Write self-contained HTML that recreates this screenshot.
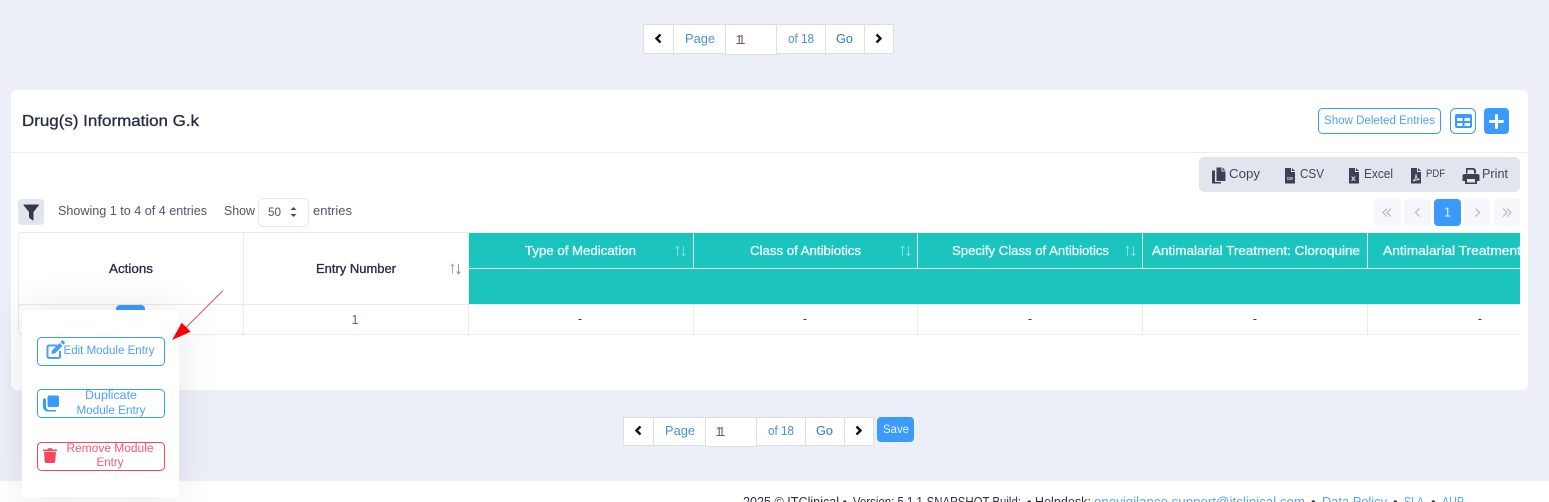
<!DOCTYPE html>
<html lang="en">
<head>
<meta charset="utf-8">
<title>Drug(s) Information</title>
<style>
html,body{margin:0;padding:0;width:1549px;height:502px;overflow:hidden;background:#eceff8}
svg{display:block}
text{font-family:"Liberation Sans",Arial,sans-serif;white-space:pre}
.b{stroke:currentColor;stroke-width:.3}
</style>
</head>
<body>
<svg xmlns="http://www.w3.org/2000/svg" width="1549" height="502" viewBox="0 0 1549 502">
<defs>
<clipPath id="tc"><rect x="18" y="228" width="1502" height="120"/></clipPath>
<clipPath id="fc"><rect x="0" y="481" width="1549" height="21"/></clipPath>
<filter id="sh" x="-60%" y="-40%" width="220%" height="180%"><feGaussianBlur stdDeviation="22"/></filter>
</defs>

<rect width="1549" height="502" fill="#eceff8"/>

<!-- top pagination -->
<g font-size="13">
<rect x="643.5" y="24.5" width="250" height="29" fill="#fff" stroke="#dedfe3"/>
<path d="M673.5 24v30M825.5 24v30M864.5 24v30" stroke="#dedfe3" fill="none"/>
<rect x="725.5" y="24.5" width="51" height="30" fill="#fff" stroke="#dedfe3"/>
<path d="M660.5 34.500l-4 4 4 4" fill="none" stroke="#111" stroke-width="2.400"/>
<path d="M876.5 34.500l4 4-4 4" fill="none" stroke="#111" stroke-width="2.400"/>
<text x="685" y="43" fill="#4a8fd6" textLength="30" lengthAdjust="spacingAndGlyphs">Page</text>
<text x="735.500" y="44" fill="#7d5a48" style="font-size:12.500px;letter-spacing:-3.200px">11</text>
<text x="788" y="43" fill="#4a8fd6" textLength="26" lengthAdjust="spacingAndGlyphs">of 18</text>
<text x="836" y="43" fill="#2f78c8" textLength="17" lengthAdjust="spacingAndGlyphs">Go</text>
</g>

<!-- card -->
<rect x="11" y="90" width="1517" height="300" rx="6" fill="#fff"/>
<text x="22" y="126" font-size="16" fill="#252b42" class="b" style="color:#252b42" textLength="177" lengthAdjust="spacingAndGlyphs">Drug(s) Information G.k</text>
<rect x="11" y="152" width="1517" height="1" fill="#eceef5"/>

<rect x="1318.500" y="108.500" width="122" height="25" rx="4" fill="#fff" stroke="#3a9bfd"/>
<text x="1324" y="124" font-size="11.500" fill="#4f9ffb" textLength="111" lengthAdjust="spacingAndGlyphs">Show Deleted Entries</text>
<rect x="1450.500" y="108.500" width="25" height="25" rx="5" fill="#fff" stroke="#3a9bfd"/>
<path d="M1457 114h13a2 2 0 0 1 2 2v10a2 2 0 0 1-2 2h-13a2 2 0 0 1-2-2v-10a2 2 0 0 1 2-2zm0 4v3h5.500v-3zm7.500 0v3h5.500v-3zm-7.500 5v3h5.500v-3zm7.500 0v3h5.500v-3z" fill="#3a9bfd" fill-rule="evenodd"/>
<rect x="1484" y="108" width="25" height="26" rx="4" fill="#3a9bfd"/>
<path d="M1496.500 115.500v12M1490.500 121.500h12" stroke="#fff" stroke-width="3" stroke-linecap="round"/>

<!-- toolbar -->
<rect x="1199" y="157" width="321" height="35" rx="5" fill="#e2e4ee"/>
<g fill="#3b4255">
<path d="M1216.500 167.500h5v4h4v9.500h-9z"/>
<path d="M1222.500 167.500l3 3h-3zM1212 170.500h3v11.500h6v1.500h-9z"/>
<path d="M1285 168h6v4h4v11.500h-10zM1292 168l3 3h-3z"/>
<path d="M1349 168h6v4h4v11.500h-10zM1356 168l3 3h-3z"/>
<path d="M1411 168h6v4h4v11.500h-10zM1418 168l3 3h-3z"/>
<path d="M1466 168h8l2 2v3.500h-2v-3l-1-.8h-5.500v3.800h-1.500zM1464.500 174h13a2 2 0 0 1 2 2v5h-2.500v3h-12v-3h-2.500v-5a2 2 0 0 1 2-2zm2.500 5v3.500h8v-3.500z" fill-rule="evenodd"/>
</g>
<text x="1287" y="180" font-size="5" font-weight="bold" fill="#e2e4ee" textLength="6" lengthAdjust="spacingAndGlyphs">csv</text>
<text x="1351" y="181" font-size="8.500" font-weight="bold" fill="#e2e4ee">x</text>
<path d="M1413 181c2-1 3-4 3-7 0 3 1 5 3.500 5.500-2 0-4 .5-6.500 1.500z" fill="none" stroke="#e2e4ee" stroke-width=".9"/>
<g fill="#3f465a" font-size="13">
<text x="1229" y="178" textLength="31" lengthAdjust="spacingAndGlyphs">Copy</text>
<text x="1300" y="178" textLength="24" lengthAdjust="spacingAndGlyphs">CSV</text>
<text x="1364" y="178" textLength="29" lengthAdjust="spacingAndGlyphs">Excel</text>
<text x="1426" y="177" style="font-size:11px" textLength="19" lengthAdjust="spacingAndGlyphs">PDF</text>
<text x="1482" y="178" textLength="26" lengthAdjust="spacingAndGlyphs">Print</text>
</g>

<!-- datatable pager -->
<g fill="#f6f7fa">
<rect x="1374" y="199" width="27" height="27" rx="4"/>
<rect x="1404" y="199" width="27" height="27" rx="4"/>
<rect x="1464" y="199" width="26" height="27" rx="4"/>
<rect x="1494" y="199" width="26" height="27" rx="4"/>
</g>
<rect x="1434" y="199" width="27" height="27" rx="4" fill="#3a9bfd"/>
<g fill="none" stroke="#b4b7c0" stroke-width="1.200">
<path d="M1387 208.500l-4 4 4 4M1391 208.500l-4 4 4 4"/>
<path d="M1419.500 208.500l-4 4 4 4"/>
<path d="M1475.500 208.500l4 4-4 4"/>
<path d="M1503 208.500l4 4-4 4M1507 208.500l4 4-4 4"/>
</g>
<text x="1447.500" y="216.500" font-size="12.500" fill="#e8f2ff" text-anchor="middle">1</text>

<!-- filter row -->
<rect x="18" y="199" width="26" height="26" rx="4" fill="#e2e4ee"/>
<path d="M24 205h14.500l-5.500 7v8l-3.500-2.500v-5.500z" fill="#343a4e" stroke="#343a4e" stroke-linejoin="round"/>
<text x="58" y="215" font-size="12.500" fill="#4f566b" textLength="149" lengthAdjust="spacingAndGlyphs">Showing 1 to 4 of 4 entries</text>
<text x="224" y="215" font-size="12.500" fill="#4f566b" textLength="31" lengthAdjust="spacingAndGlyphs">Show</text>
<rect x="258.500" y="198.500" width="50" height="28" rx="5" fill="#fff" stroke="#e6e8f0"/>
<text x="268" y="216" font-size="11.500" fill="#4f566b" textLength="13" lengthAdjust="spacingAndGlyphs">50</text>
<path d="M290.500 210l3 -3 3 3zM290.500 214l3 3 3-3z" fill="#4a5060"/>
<text x="313" y="215" font-size="12.500" fill="#4f566b" textLength="39" lengthAdjust="spacingAndGlyphs">entries</text>

<!-- table -->
<g clip-path="url(#tc)">
<rect x="18.500" y="232.500" width="1520" height="102" fill="#fff" stroke="#e8eaf2" rx="3"/>
<rect x="469" y="233" width="1060" height="71" fill="#1cc4be"/>
<rect x="469" y="268" width="1060" height="1" fill="#e6f8f7"/>
<path d="M693.500 233v35M917.500 233v35M1142.500 233v35M1367.500 233v35" stroke="#e6f8f7" fill="none"/>
<path d="M18 304.500h1510M243.500 232v102M468.500 232v102M693.500 305v30M917.500 305v30M1142.500 305v30M1367.500 305v30" stroke="#e8eaf2" fill="none"/>

<text x="109" y="273" font-size="12.500" fill="#252b42" class="b" style="color:#252b42" textLength="44" lengthAdjust="spacingAndGlyphs">Actions</text>
<text x="316" y="273" font-size="12.500" fill="#252b42" class="b" style="color:#252b42" textLength="80" lengthAdjust="spacingAndGlyphs">Entry Number</text>
<path d="M452.500 274v-10m-2 2.500l2-2.500 2 2.500" stroke="#b9a797" fill="none"/>
<path d="M458.500 264v10m-2-2.500l2 2.500 2-2.500" stroke="#8f939c" fill="none"/>

<g font-size="12.500" fill="#eefbfa" class="b" style="color:#eefbfa">
<text x="525" y="255" textLength="111" lengthAdjust="spacingAndGlyphs">Type of Medication</text>
<text x="750" y="255" textLength="111" lengthAdjust="spacingAndGlyphs">Class of Antibiotics</text>
<text x="952" y="255" textLength="157" lengthAdjust="spacingAndGlyphs">Specify Class of Antibiotics</text>
<text x="1152" y="255" textLength="208" lengthAdjust="spacingAndGlyphs">Antimalarial Treatment: Cloroquine</text>
<text x="1383" y="255" textLength="138" lengthAdjust="spacingAndGlyphs">Antimalarial Treatment</text>
</g>
<g fill="none" stroke="#7fdfda">
<path d="M677.500 256v-10m-2 2.500l2-2.500 2 2.500M683.500 246v10m-2-2.500l2 2.500 2-2.500"/>
<path d="M902.500 256v-10m-2 2.500l2-2.500 2 2.500M908.500 246v10m-2-2.500l2 2.500 2-2.500"/>
<path d="M1127.500 256v-10m-2 2.500l2-2.500 2 2.500M1133.500 246v10m-2-2.500l2 2.500 2-2.500"/>
<path d="M1352 255v-7m-1.500 2l1.500-2 1.500 2M1356.500 248v7m-1.500-2l1.500 2 1.500-2"/>
</g>

<text x="355" y="324" font-size="12.500" fill="#3f6da3" text-anchor="middle">1</text>
<g font-size="12.500" fill="#3a3f4c" text-anchor="middle">
<text x="580" y="323">-</text>
<text x="805" y="323">-</text>
<text x="1030" y="323">-</text>
<text x="1255" y="323">-</text>
<text x="1480" y="323">-</text>
</g>
<rect x="18.500" y="304.500" width="225" height="30" rx="4" fill="#fff" stroke="#e8eaf2"/>
<rect x="116" y="305" width="29" height="16" rx="4" fill="#3a9bfd"/>
</g>

<!-- bottom pagination -->
<g font-size="13">
<rect x="623.500" y="417.500" width="250" height="28" fill="#fff" stroke="#dedfe3"/>
<path d="M653.500 417v29M805.500 417v29M844.500 417v29" stroke="#dedfe3" fill="none"/>
<rect x="705.500" y="417.500" width="51" height="29" fill="#fff" stroke="#dedfe3"/>
<path d="M640.500 426.500l-4 4 4 4" fill="none" stroke="#111" stroke-width="2.400"/>
<path d="M856.500 426.500l4 4-4 4" fill="none" stroke="#111" stroke-width="2.400"/>
<text x="665" y="435" fill="#4a8fd6" textLength="30" lengthAdjust="spacingAndGlyphs">Page</text>
<text x="715.500" y="436" fill="#7d5a48" style="font-size:12.500px;letter-spacing:-3.200px">11</text>
<text x="768" y="435" fill="#4a8fd6" textLength="26" lengthAdjust="spacingAndGlyphs">of 18</text>
<text x="816" y="435" fill="#2f78c8" textLength="17" lengthAdjust="spacingAndGlyphs">Go</text>
</g>
<rect x="877" y="417" width="37" height="25" rx="4" fill="#3a9bfd"/>
<text x="883" y="433" font-size="11.500" fill="#eaf4ff" textLength="26" lengthAdjust="spacingAndGlyphs">Save</text>

<!-- footer -->
<rect x="0" y="481" width="1549" height="21" fill="#fff"/>
<g clip-path="url(#fc)" font-size="13.500">
<text x="743" y="506.500" fill="#2c3040" textLength="104" lengthAdjust="spacingAndGlyphs">2025 © ITClinical •</text>
<text x="853" y="506.500" fill="#2c3040" textLength="168" lengthAdjust="spacingAndGlyphs">Version: 5.1.1-SNAPSHOT Build:</text>
<text x="1027" y="506.500" fill="#2c3040" textLength="64" lengthAdjust="spacingAndGlyphs">• Helpdesk:</text>
<text x="1094" y="506.500" fill="#5aa5ef" textLength="211" lengthAdjust="spacingAndGlyphs">onevigilance.support@itclinical.com</text>
<text x="1311" y="506.500" fill="#2c3040">•</text>
<text x="1322" y="506.500" fill="#5aa5ef" textLength="65" lengthAdjust="spacingAndGlyphs">Data Policy</text>
<text x="1393" y="506.500" fill="#2c3040">•</text>
<text x="1404" y="506.500" fill="#5aa5ef" textLength="20" lengthAdjust="spacingAndGlyphs">SLA</text>
<text x="1431" y="506.500" fill="#2c3040">•</text>
<text x="1442" y="506.500" fill="#5aa5ef" textLength="22" lengthAdjust="spacingAndGlyphs">AUP</text>
</g>

<!-- popup -->
<rect x="22" y="310" width="157" height="187" rx="4" fill="#000" opacity=".09" filter="url(#sh)"/>
<rect x="22" y="310" width="157" height="187" rx="4" fill="#fff"/>

<rect x="37.500" y="337.500" width="127" height="28" rx="4" fill="#fff" stroke="#3a9bfd"/>
<path d="M57 345.500h-8a1.500 1.500 0 0 0-1.500 1.500v9.500a1.500 1.500 0 0 0 1.500 1.500h9.500a1.500 1.500 0 0 0 1.500-1.500v-5.500" fill="none" stroke="#4a9cfb" stroke-width="2"/>
<path d="M52 350.500l7.500-7.500 3 3-7.500 7.500-3.500.5zM60.500 342l1.500-1.500a1 1 0 0 1 1.200 0l1.500 1.500a1 1 0 0 1 0 1.200l-1.500 1.500z" fill="#4a9cfb"/>
<text x="63.500" y="354" font-size="11.500" fill="#4f9ffb" textLength="91" lengthAdjust="spacingAndGlyphs">Edit Module Entry</text>

<rect x="37.500" y="389.500" width="127" height="28" rx="4" fill="#fff" stroke="#3a9bfd"/>
<rect x="47.500" y="395.500" width="11.500" height="11.500" rx="2" fill="#3a9bfd"/>
<path d="M46 399.500v7.500a3 3 0 0 0 3 3h7v1.500h-8.500a4.500 4.500 0 0 1-4.500-4.500v-6.500a1.500 1.500 0 0 1 3-1z" fill="#3a9bfd"/>
<text x="111" y="399" font-size="11.500" fill="#4f9ffb" text-anchor="middle" textLength="52" lengthAdjust="spacingAndGlyphs">Duplicate</text>
<text x="111" y="414" font-size="11.500" fill="#4f9ffb" text-anchor="middle" textLength="69" lengthAdjust="spacingAndGlyphs">Module Entry</text>

<rect x="37.500" y="442.500" width="127" height="28" rx="4" fill="#fff" stroke="#f5455f"/>
<path d="M43 449.500h4.500l.7-1.200h3.600l.7 1.200h4.500v1.500h-14z" fill="#f5455f"/>
<path d="M44 451.800h12l-.8 10a1.300 1.300 0 0 1-1.300 1.200h-7.800a1.300 1.300 0 0 1-1.300-1.200z" fill="#f5455f"/>
<text x="110" y="452" font-size="11.500" fill="#f7596f" text-anchor="middle" textLength="87" lengthAdjust="spacingAndGlyphs">Remove Module</text>
<text x="110" y="466" font-size="11.500" fill="#f7596f" text-anchor="middle" textLength="27" lengthAdjust="spacingAndGlyphs">Entry</text>

<!-- annotation arrow -->
<path d="M223 290.500L186 327.500" stroke="#f0141e" stroke-width=".8" fill="none"/>
<path d="M172 340L181.700 322.700L190.700 331.700z" fill="#fb0007"/>
</svg>
</body>
</html>
